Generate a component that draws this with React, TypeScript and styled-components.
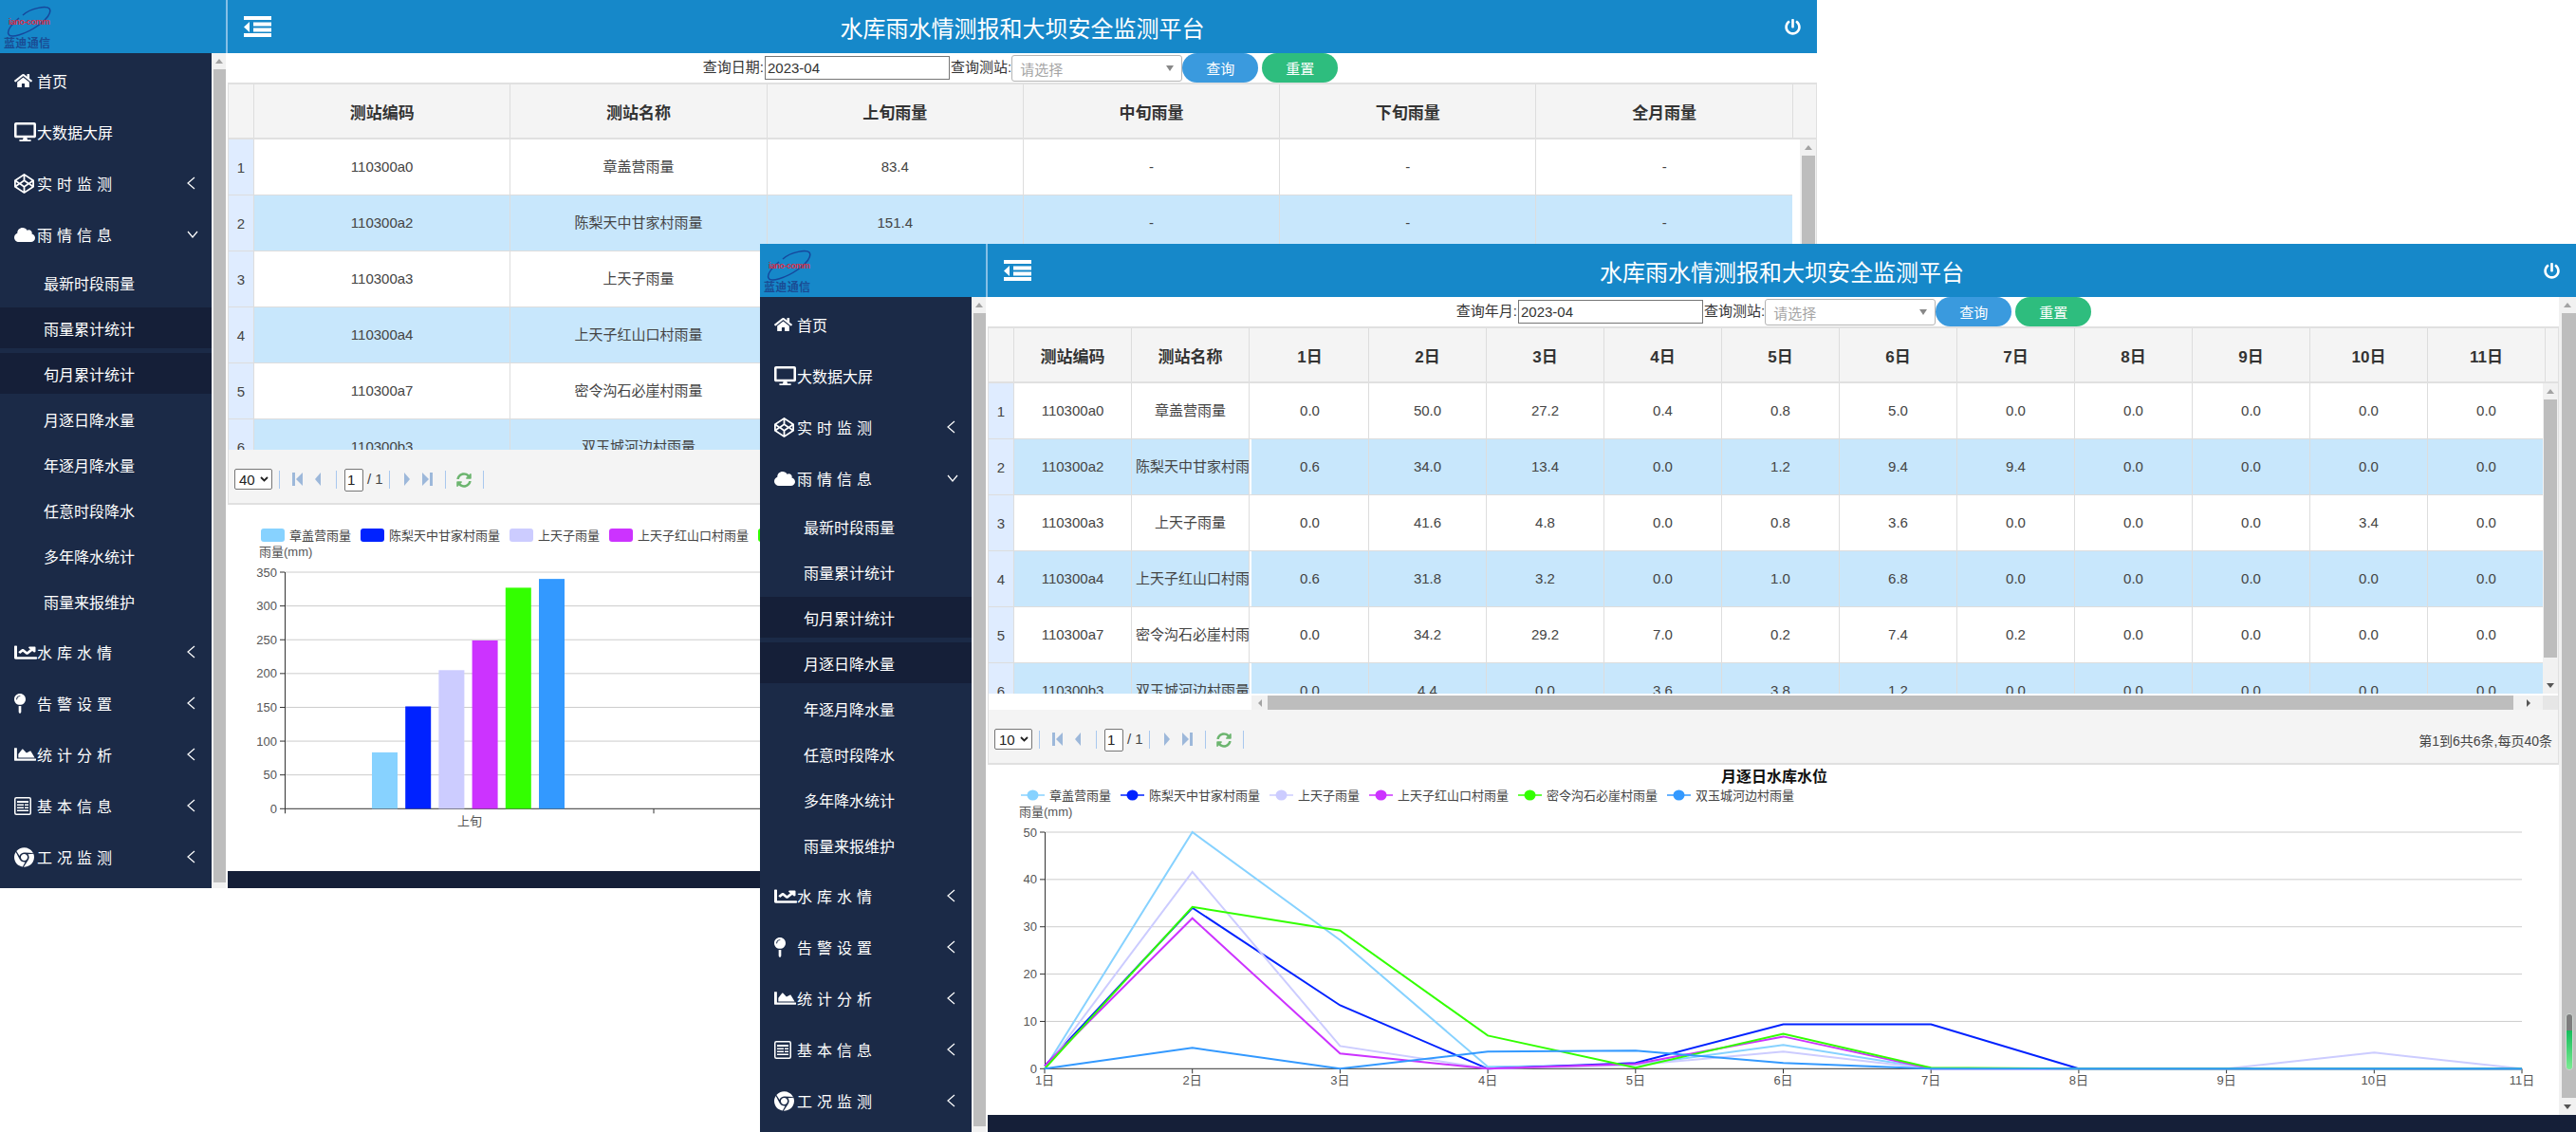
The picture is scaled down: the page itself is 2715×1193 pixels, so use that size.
import React from "react";
import styled, { createGlobalStyle } from "styled-components";
import {
  FaHome, FaDesktop, FaCodepen, FaCloud, FaChartLine, FaMapPin, FaChartArea,
  FaChrome, FaPowerOff, FaSyncAlt,
} from "react-icons/fa";

const FONT = `"Liberation Sans", "Noto Sans CJK SC", sans-serif`;
const SERIES_COLORS = ["#87d2ff", "#0022ff", "#ccccff", "#cc33ff", "#33ff00", "#3399ff"];
const NAMES = ["章盖营雨量", "陈梨天中甘家村雨量", "上天子雨量", "上天子红山口村雨量", "密令沟石必崖村雨量", "双玉城河边村雨量"];
const CODES = ["110300a0", "110300a2", "110300a3", "110300a4", "110300a7", "110300b3"];
const PAGER_TEXT = "第1到6共6条,每页40条";

const Global = createGlobalStyle`
  html, body { margin: 0; padding: 0; background: #fff; }
  body { width: 2715px; height: 1193px; overflow: hidden; font-family: ${FONT}; }
  * { box-sizing: border-box; }
`;

const Desktop = styled.div`
  position: relative;
  width: 2715px;
  height: 1193px;
  background: #fff;
  overflow: hidden;
`;

const Window = styled.section<{ $left: number; $top: number; $width: number }>`
  position: absolute;
  left: ${(p) => p.$left}px;
  top: ${(p) => p.$top}px;
  width: ${(p) => p.$width}px;
  height: 936px;
  display: grid;
  grid-template-columns: 240px 1fr;
  grid-template-rows: 56px 880px;
  background: #fff;
`;

const Brand = styled.div`
  background: #1688c9;
  border-right: 2px solid #86bfe6;
  padding: 6px 0 0 3px;
`;

const TopBar = styled.header`
  background: #1688c9;
  display: grid;
  grid-template-columns: 1fr auto 1fr;
  align-items: center;
  color: #fff;
`;

const Toggle = styled.svg`
  width: 29px;
  height: 22px;
  margin-left: 17px;
  display: block;
`;

const Title = styled.h1`
  margin: 0;
  font-size: 24px;
  font-weight: 400;
  white-space: nowrap;
  color: #fff;
`;

const Power = styled.span`
  justify-self: end;
  margin-right: 17px;
  display: flex;
  font-size: 17px;
  color: #fff;
`;

const Side = styled.aside`
  display: flex;
  width: 238px;
  height: 100%;
`;

const Menu = styled.nav`
  width: 223px;
  height: 100%;
  background: #1b2a47;
  padding-top: 2px;
  overflow: hidden;
`;

const MenuItem = styled.div`
  height: 54px;
  display: flex;
  align-items: center;
  padding-left: 15px;
  color: #fff;
  font-size: 16px;
  white-space: nowrap;
`;

const MenuIcon = styled.span<{ $w: number; $h: number }>`
  width: 24px;
  flex: none;
  display: flex;
  align-items: center;
  color: #fff;

  svg {
    width: ${(p) => p.$w}px;
    height: ${(p) => p.$h}px;
    display: block;
  }
`;

const MenuLabel = styled.span<{ $spaced?: boolean }>`
  flex: 1;
  letter-spacing: ${(p) => (p.$spaced ? "5px" : "0")};
`;

const Chevron = styled.svg`
  width: 12px;
  height: 14px;
  margin-right: 14px;
  flex: none;
`;

const SubList = styled.div`
  padding-top: 2px;
`;

const SubItem = styled.div<{ $active?: boolean }>`
  height: 43px;
  margin-bottom: 5px;
  padding-left: 46px;
  display: flex;
  align-items: center;
  color: #fff;
  font-size: 16px;
  background: ${(p) => (p.$active ? "#151f38" : "transparent")};
`;

const Track = styled.div<{ $w: number }>`
  width: ${(p) => p.$w}px;
  flex: none;
  background: #f1f1f1;
  display: flex;
  flex-direction: column;
  align-items: flex-end;
`;

const ArrowSlot = styled.div`
  height: 17px;
  align-self: stretch;
  display: flex;
  align-items: center;
  justify-content: center;
  flex: none;
`;

const ArrowSlotEnd = styled(ArrowSlot)`
  margin-top: auto;
`;

const Thumb = styled.div<{ $w: number; $h?: number }>`
  width: ${(p) => p.$w}px;
  background: #bdbdbd;
  ${(p) => (p.$h ? `height: ${p.$h}px; flex: none;` : "flex: 1;")}
`;

const TriUp = styled.span`
  border-left: 4px solid transparent;
  border-right: 4px solid transparent;
  border-bottom: 5px solid #a3a3a3;
`;

const TriDown = styled.span`
  border-left: 4px solid transparent;
  border-right: 4px solid transparent;
  border-top: 5px solid #555;
`;

const TriLeft = styled.span`
  border-top: 4px solid transparent;
  border-bottom: 4px solid transparent;
  border-right: 4px solid #a3a3a3;
`;

const TriRight = styled.span`
  border-top: 4px solid transparent;
  border-bottom: 4px solid transparent;
  border-left: 4px solid #555;
`;

const TrackFoot = styled.div`
  height: 6px;
  flex: none;
`;

const Main = styled.main`
  display: flex;
  flex-direction: column;
  min-width: 0;
  height: 100%;
`;

const MainBody = styled.div`
  flex: 1;
  min-height: 0;
  display: flex;
`;

const Content = styled.div`
  flex: 1;
  min-width: 0;
  display: flex;
  flex-direction: column;
`;

const Footer = styled.div`
  height: 18px;
  flex: none;
  background: #151f38;
`;

const FilterBar = styled.div<{ $nudge: number }>`
  height: 31px;
  flex: none;
  display: flex;
  justify-content: center;
  align-items: flex-start;
  padding-left: ${(p) => p.$nudge}px;
  font-size: 15px;
  color: #333;
`;

const FilterLabel = styled.label`
  white-space: nowrap;
  line-height: 28px;
  margin-top: 1px;
`;

const DateField = styled.div`
  width: 195px;
  height: 25px;
  margin: 3px 1px 0 1px;
  border: 1px solid #767676;
  padding-left: 2px;
  line-height: 23px;
  color: #333;
  background: #fff;
`;

const SelectField = styled.div`
  width: 180px;
  height: 28px;
  margin-top: 2px;
  border: 1px solid #b4b4b4;
  border-radius: 3px;
  padding: 0 8px;
  display: flex;
  justify-content: space-between;
  align-items: center;
  color: #a5a5a5;
`;

const Caret = styled.span`
  border-left: 4px solid transparent;
  border-right: 4px solid transparent;
  border-top: 6px solid #888;
`;

const PillButton = styled.button<{ $color: string }>`
  width: 80px;
  height: 31px;
  margin-right: 4px;
  border: 0;
  padding: 0;
  border-radius: 16px;
  background: ${(p) => p.$color};
  color: #fff;
  font: 15px ${FONT};
`;

const GridPanel = styled.div`
  flex: none;
  border-left: 1px solid #e0e0e0;
  border-right: 1px solid #e0e0e0;
`;

const HeadRow = styled.div`
  height: 60px;
  display: flex;
  background: #f4f4f4;
  border-top: 2px solid #e0e0e0;
  border-bottom: 2px solid #e0e0e0;
`;

const HeadCell = styled.div<{ $w: number }>`
  flex: 0 0 ${(p) => p.$w}px;
  border-right: 1px solid #ddd;
  display: flex;
  align-items: center;
  justify-content: center;
  font-size: 17px;
  font-weight: 700;
  color: #333;
  white-space: nowrap;
`;

const HeadGap = styled.div<{ $w: number }>`
  flex: 0 0 ${(p) => p.$w}px;
`;

const BodyWrap = styled.div`
  display: flex;
  height: 327px;
`;

const BodyRows = styled.div`
  flex: 1;
  min-width: 0;
  overflow: hidden;
`;

const Row = styled.div`
  display: flex;
  height: 59px;
`;

const RowNo = styled.div<{ $w: number }>`
  flex: 0 0 ${(p) => p.$w}px;
  background: #dfecff;
  border-right: 1px solid #ddd;
  border-bottom: 1px solid #ddd;
  display: flex;
  align-items: center;
  justify-content: center;
  font-size: 15px;
  color: #444;
`;

const Cell = styled.div<{ $w: number; $alt: boolean }>`
  flex: 0 0 ${(p) => p.$w}px;
  background: ${(p) => (p.$alt ? "#c8e7fc" : "#fff")};
  border-right: 1px solid #ddd;
  border-bottom: 1px solid #ddd;
  padding: 0 4px;
  line-height: 58px;
  text-align: center;
  font-size: 15px;
  color: #444;
  white-space: nowrap;
  overflow: hidden;
`;

const RowGap = styled.div<{ $w: number }>`
  flex: 0 0 ${(p) => p.$w}px;
  background: #fff;
  border-bottom: 1px solid #ddd;
`;

const ScrollGutter = styled.div<{ $w: number }>`
  flex: 0 0 ${(p) => p.$w}px;
  display: flex;
  justify-content: flex-end;
`;

const TableVBar = styled(Track)`
  align-items: center;
`;

const HBarRow = styled.div`
  height: 17px;
  display: flex;
  padding-top: 2px;
`;

const HBarBlank = styled.div`
  flex: 0 0 277px;
`;

const HBarTrack = styled.div`
  flex: 1;
  display: flex;
  background: #f1f1f1;
`;

const HBarArrow = styled.div<{ $w: number }>`
  flex: 0 0 ${(p) => p.$w}px;
  display: flex;
  align-items: center;
  justify-content: center;
`;

const HBarThumb = styled.div`
  flex: 1;
  background: #bdbdbd;
`;

const HBarCorner = styled.div`
  flex: 0 0 16px;
  background: #e6e6e6;
`;

const Pager = styled.div`
  height: 58px;
  display: flex;
  align-items: flex-start;
  padding: 20px 6px 0 6px;
  background: #f4f4f4;
  border-bottom: 2px solid #e0e0e0;
  font-size: 15px;
  color: #444;
`;

const PageSize = styled.div`
  width: 40px;
  height: 22px;
  border: 1px solid #767676;
  border-radius: 2px;
  background: #fff;
  display: flex;
  align-items: center;
  justify-content: space-between;
  padding: 0 3px 0 4px;
  color: #222;
`;

const PagerSep = styled.span<{ $gap: number }>`
  width: 1px;
  height: 19px;
  margin: 2px 0 0 ${(p) => p.$gap}px;
  background: #a9c8ee;
  flex: none;
`;

const PagerIcon = styled.svg<{ $gap: number; $w: number }>`
  width: ${(p) => p.$w}px;
  height: 14px;
  margin: 4px 0 0 ${(p) => p.$gap}px;
  flex: none;
`;

const PageInput = styled.div`
  width: 20px;
  height: 24px;
  margin-left: 8px;
  border: 1px solid #767676;
  border-radius: 2px;
  background: #fff;
  padding-left: 2px;
  line-height: 22px;
  color: #222;
`;

const PageTotal = styled.span`
  margin: 2px 0 0 4px;
  width: 16px;
  white-space: nowrap;
`;

const Refresh = styled.span`
  margin: 4px 0 0 11px;
  display: flex;
  font-size: 16px;
  color: #6cb56f;
`;

const PagerInfo = styled.span`
  margin: 2px 0 0 auto;
  font-size: 14px;
  color: #444;
  white-space: nowrap;
`;

const ChartBox = styled.div`
  flex: 1;
  min-height: 0;
  overflow: hidden;
`;

const ChartSvg = styled.svg`
  display: block;
  font-family: ${FONT};
`;

const Gauge = styled.div`
  position: absolute;
  left: 1903px;
  top: 811px;
  width: 8px;
  height: 60px;
  border-radius: 4px;
  overflow: hidden;
  display: flex;
  flex-direction: column;
  border: 1px solid #cfd8d2;
`;

const GaugeEmpty = styled.div`
  height: 17px;
  background: #7d7d7d;
`;

const GaugeFill = styled.div`
  flex: 1;
  background: linear-gradient(#14bd5b, #7cec93);
`;

const Logo = () => (
  <svg width="60" height="46" viewBox="0 0 60 46">
    <path d="M17 13 C10 19 4 26 6 30 C8 35 24 30 37 21 C46 15 52 7 49 3 C46 0 30 2 21 10" fill="none" stroke="#16479c" strokeWidth="1.5" />
    <text x="6" y="19.5" fontSize="9" fontWeight="700" fill="#d6304a" fontFamily={FONT} textLength="44">iano-comm</text>
    <text x="1" y="44" fontSize="12" fontWeight="700" fill="#1a4c94" fontFamily={FONT} textLength="49">蓝迪通信</text>
  </svg>
);

const NewspaperGlyph = () => (
  <svg viewBox="0 0 18 19" fill="#fff">
    <rect x="0.75" y="0.75" width="16.5" height="17.5" rx="1.5" fill="none" stroke="#fff" strokeWidth="1.5" />
    <rect x="3" y="4" width="12" height="2" />
    <rect x="3" y="7.5" width="7" height="1.5" />
    <rect x="11" y="7.5" width="4" height="1.5" />
    <rect x="3" y="10.5" width="7" height="1.5" />
    <rect x="11" y="10.5" width="4" height="1.5" />
    <rect x="3" y="13.5" width="12" height="1.5" />
  </svg>
);

const LeftChevron = () => (
  <Chevron viewBox="0 0 12 14">
    <path d="M8 1 L1 7 L8 13" fill="none" stroke="#fff" strokeWidth="1.2" />
  </Chevron>
);

const DownChevron = () => (
  <Chevron viewBox="0 0 12 14">
    <path d="M1 4 L6 10 L11 4" fill="none" stroke="#fff" strokeWidth="1.2" />
  </Chevron>
);

const STRETCH = { preserveAspectRatio: "none" };

const TOP_A = [
  { icon: <FaHome {...STRETCH} />, w: 19, h: 16, label: "首页" },
  { icon: <FaDesktop {...STRETCH} />, w: 23, h: 20, label: "大数据大屏" },
  { icon: <FaCodepen {...STRETCH} />, w: 21, h: 21, label: "实时监测", spaced: true, chev: true },
];
const SUBS = ["最新时段雨量", "雨量累计统计", "旬月累计统计", "月逐日降水量", "年逐月降水量", "任意时段降水", "多年降水统计", "雨量来报维护"];
const TOP_B = [
  { icon: <FaChartLine {...STRETCH} />, w: 24, h: 19, label: "水库水情" },
  { icon: <FaMapPin {...STRETCH} />, w: 12, h: 21, label: "告警设置" },
  { icon: <FaChartArea {...STRETCH} />, w: 23, h: 18, label: "统计分析" },
  { icon: <NewspaperGlyph />, w: 18, h: 19, label: "基本信息" },
  { icon: <FaChrome {...STRETCH} />, w: 21, h: 21, label: "工况监测" },
];

const Sidebar = ({ active }: { active: number[] }) => (
  <Side>
    <Menu>
      {TOP_A.map((m) => (
        <MenuItem key={m.label}>
          <MenuIcon $w={m.w} $h={m.h}>{m.icon}</MenuIcon>
          <MenuLabel $spaced={m.spaced}>{m.label}</MenuLabel>
          {m.chev && <LeftChevron />}
        </MenuItem>
      ))}
      <MenuItem>
        <MenuIcon $w={22} $h={17}><FaCloud {...STRETCH} /></MenuIcon>
        <MenuLabel $spaced>雨情信息</MenuLabel>
        <DownChevron />
      </MenuItem>
      <SubList>
        {SUBS.map((s, i) => (
          <SubItem key={s} $active={active.includes(i)}>{s}</SubItem>
        ))}
      </SubList>
      {TOP_B.map((m) => (
        <MenuItem key={m.label}>
          <MenuIcon $w={m.w} $h={m.h}>{m.icon}</MenuIcon>
          <MenuLabel $spaced>{m.label}</MenuLabel>
          <LeftChevron />
        </MenuItem>
      ))}
    </Menu>
    <Track $w={15}>
      <ArrowSlot><TriUp /></ArrowSlot>
      <Thumb $w={13} />
      <TrackFoot />
    </Track>
  </Side>
);

const Header = () => (
  <TopBar>
    <Toggle viewBox="0 0 29 22" fill="#fff">
      <rect width="29" height="4" />
      <rect x="10" y="6.5" width="19" height="4" />
      <rect x="10" y="12.5" width="19" height="4" />
      <rect y="18" width="29" height="4" />
      <polygon points="6,6 0,11.5 6,17" />
    </Toggle>
    <Title>水库雨水情测报和大坝安全监测平台</Title>
    <Power><FaPowerOff /></Power>
  </TopBar>
);

const Filters = ({ dateLabel, nudge }: { dateLabel: string; nudge: number }) => (
  <FilterBar $nudge={nudge}>
    <FilterLabel>{dateLabel}:</FilterLabel>
    <DateField>2023-04</DateField>
    <FilterLabel>查询测站:</FilterLabel>
    <SelectField>请选择<Caret /></SelectField>
    <PillButton $color="#3a9ade">查询</PillButton>
    <PillButton $color="#2ebd7e">重置</PillButton>
  </FilterBar>
);

const PagerBar = ({ size }: { size: string }) => (
  <Pager>
    <PageSize>
      {size}
      <svg width="9" height="6" viewBox="0 0 9 6"><path d="M1 1 L4.5 4.5 L8 1" fill="none" stroke="#222" strokeWidth="1.8" /></svg>
    </PageSize>
    <PagerSep $gap={7} />
    <PagerIcon $gap={13} $w={11} viewBox="0 0 11 14" fill="#9db8da">
      <rect width="3" height="14" />
      <polygon points="11,0 4,7 11,14" />
    </PagerIcon>
    <PagerIcon $gap={13} $w={6} viewBox="0 0 6 14" fill="#9db8da">
      <polygon points="6,0 0,7 6,14" />
    </PagerIcon>
    <PagerSep $gap={16} />
    <PageInput>1</PageInput>
    <PageTotal>/ 1</PageTotal>
    <PagerSep $gap={7} />
    <PagerIcon $gap={15} $w={6} viewBox="0 0 6 14" fill="#9db8da">
      <polygon points="0,0 6,7 0,14" />
    </PagerIcon>
    <PagerIcon $gap={13} $w={11} viewBox="0 0 11 14" fill="#9db8da">
      <polygon points="0,0 7,7 0,14" />
      <rect x="8" width="3" height="14" />
    </PagerIcon>
    <PagerSep $gap={13} />
    <Refresh><FaSyncAlt /></Refresh>
    <PagerSep $gap={12} />
    <PagerInfo>{PAGER_TEXT}</PagerInfo>
  </Pager>
);

type LegendMark = "swatch" | "line";

const Legend = ({ mark }: { mark: LegendMark }) => {
  let x = 35;
  return (
    <g>
      {NAMES.map((n, i) => {
        const x0 = x;
        x += 30 + n.length * 13 + 10;
        return (
          <g key={n}>
            {mark === "swatch" ? (
              <rect x={x0} y={25} width={25} height={14} rx={3} fill={SERIES_COLORS[i]} />
            ) : (
              <g>
                <line x1={x0} x2={x0 + 25} y1={32} y2={32} stroke={SERIES_COLORS[i]} strokeWidth={1.5} />
                <ellipse cx={x0 + 12.5} cy={32} rx={6} ry={5.5} fill={SERIES_COLORS[i]} />
              </g>
            )}
            <text x={x0 + 30} y={37} fontSize={13} fill="#444">{n}</text>
          </g>
        );
      })}
    </g>
  );
};

const Axes = ({ ticks, right, cats }: { ticks: number[]; right: number; cats: { x: number; label?: string }[] }) => {
  const top = 71;
  const zero = 320.3;
  const max = ticks[ticks.length - 1];
  const yOf = (v: number) => zero - (v / max) * (zero - top);
  return (
    <g>
      <text x={33} y={54} fontSize={13} fill="#555">雨量(mm)</text>
      {ticks.map((t) => (
        <g key={t}>
          {t !== 0 && <line x1={60} x2={right} y1={yOf(t)} y2={yOf(t)} stroke="#ccc" strokeWidth={1} />}
          <line x1={55} x2={60} y1={yOf(t)} y2={yOf(t)} stroke="#333" />
          <text x={52} y={yOf(t) + 4.5} fontSize={13} textAnchor="end" fill="#555">{t}</text>
        </g>
      ))}
      <line x1={60.5} x2={60.5} y1={top} y2={zero} stroke="#333" />
      <line x1={60} x2={right} y1={zero} y2={zero} stroke="#333" strokeWidth={1} />
      {cats.map((c, i) => (
        <g key={i}>
          <line x1={c.x} x2={c.x} y1={zero} y2={zero + 5} stroke="#333" />
          {c.label && <text x={c.x} y={zero + 17} fontSize={13} textAnchor="middle" fill="#555">{c.label}</text>}
        </g>
      ))}
    </g>
  );
};

const BAR_VALUES = [83.4, 151.4, 205, 249, 327, 340];

const BarChart = () => (
  <ChartSvg width={1674} height={386}>
    <Axes
      ticks={[0, 50, 100, 150, 200, 250, 300, 350]}
      right={1610}
      cats={[{ x: 60.5 }, { x: 449 }, { x: 837 }, { x: 1225 }, { x: 1610 }]}
    />
    <Legend mark="swatch" />
    <text x={255} y={338} fontSize={13} textAnchor="middle" fill="#555">上旬</text>
    {BAR_VALUES.map((v, i) => {
      const h = (v / 350) * 249.3;
      return <rect key={i} x={152 + i * 35.2} y={320.3 - h} width={27} height={h} fill={SERIES_COLORS[i]} />;
    })}
  </ChartSvg>
);

const LINE_DATA = [
  [0, 50, 27.2, 0.4, 0.8, 5, 0, 0, 0, 0, 0],
  [0.6, 34, 13.4, 0, 1.2, 9.4, 9.4, 0, 0, 0, 0],
  [0, 41.6, 4.8, 0, 0.8, 3.6, 0, 0, 0, 3.4, 0],
  [0.6, 31.8, 3.2, 0, 1, 6.8, 0, 0, 0, 0, 0],
  [0, 34.2, 29.2, 7, 0.2, 7.4, 0.2, 0, 0, 0, 0],
  [0, 4.4, 0, 3.6, 3.8, 1.2, 0, 0, 0, 0, 0],
];

const xOfDay = (i: number) => 60 + i * 155.7;

const LineChart = () => (
  <ChartSvg width={1656} height={369}>
    <text x={829} y={18} fontSize={16} fontWeight={700} textAnchor="middle" fill="#111">月逐日水库水位</text>
    <Axes
      ticks={[0, 10, 20, 30, 40, 50]}
      right={1617}
      cats={Array.from({ length: 11 }, (_, i) => ({ x: xOfDay(i), label: `${i + 1}日` }))}
    />
    <Legend mark="line" />
    {LINE_DATA.map((d, s) => (
      <polyline
        key={s}
        fill="none"
        stroke={SERIES_COLORS[s]}
        strokeWidth={2}
        points={d.map((v, i) => `${xOfDay(i)},${320.3 - v * 4.986}`).join(" ")}
      />
    ))}
  </ChartSvg>
);

const MONTH_COLS = ["上旬雨量", "中旬雨量", "下旬雨量", "全月雨量"];
const MONTH_FIRST = ["83.4", "151.4", "205.0", "249.0", "327.0", "340.0"];

const MonthPanel = () => (
  <GridPanel>
    <HeadRow>
      <HeadCell $w={27} />
      <HeadCell $w={270.3}>测站编码</HeadCell>
      <HeadCell $w={270.3}>测站名称</HeadCell>
      {MONTH_COLS.map((c) => <HeadCell key={c} $w={270.3}>{c}</HeadCell>)}
    </HeadRow>
    <BodyWrap>
      <BodyRows>
        {CODES.map((code, r) => (
          <Row key={code}>
            <RowNo $w={27}>{r + 1}</RowNo>
            <Cell $w={270.3} $alt={r % 2 === 1}>{code}</Cell>
            <Cell $w={270.3} $alt={r % 2 === 1}>{NAMES[r]}</Cell>
            <Cell $w={270.3} $alt={r % 2 === 1}>{MONTH_FIRST[r]}</Cell>
            {[0, 1, 2].map((k) => <Cell key={k} $w={270.3} $alt={r % 2 === 1}>-</Cell>)}
          </Row>
        ))}
      </BodyRows>
      <ScrollGutter $w={25}>
        <TableVBar $w={17}>
          <ArrowSlot><TriUp /></ArrowSlot>
          <Thumb $w={14} />
        </TableVBar>
      </ScrollGutter>
    </BodyWrap>
    <PagerBar size="40" />
  </GridPanel>
);

const DAY_COLS = Array.from({ length: 11 }, (_, i) => i);

const DayPanel = () => (
  <GridPanel>
    <HeadRow>
      <HeadCell $w={27} />
      <HeadCell $w={124}>测站编码</HeadCell>
      <HeadCell $w={124}>测站名称</HeadCell>
      <HeadGap $w={2} />
      {DAY_COLS.map((d) => <HeadCell key={d} $w={124}>{d + 1}日</HeadCell>)}
    </HeadRow>
    <BodyWrap>
      <BodyRows>
        {CODES.map((code, r) => (
          <Row key={code}>
            <RowNo $w={27}>{r + 1}</RowNo>
            <Cell $w={124} $alt={r % 2 === 1}>{code}</Cell>
            <Cell $w={124} $alt={r % 2 === 1}>{NAMES[r]}</Cell>
            <RowGap $w={2} />
            {DAY_COLS.map((d) => (
              <Cell key={d} $w={124} $alt={r % 2 === 1}>{LINE_DATA[r][d].toFixed(1)}</Cell>
            ))}
          </Row>
        ))}
      </BodyRows>
      <TableVBar $w={16}>
        <ArrowSlot><TriUp /></ArrowSlot>
        <Thumb $w={14} $h={272} />
        <ArrowSlotEnd><TriDown /></ArrowSlotEnd>
      </TableVBar>
    </BodyWrap>
    <HBarRow>
      <HBarBlank />
      <HBarTrack>
        <HBarArrow $w={17}><TriLeft /></HBarArrow>
        <HBarThumb />
        <HBarArrow $w={31}><TriRight /></HBarArrow>
      </HBarTrack>
      <HBarCorner />
    </HBarRow>
    <PagerBar size="10" />
  </GridPanel>
);

export default function App() {
  return (
    <Desktop>
      <Global />
      <Window $left={0} $top={0} $width={1915}>
        <Brand><Logo /></Brand>
        <Header />
        <Sidebar active={[1, 2]} />
        <Main>
          <MainBody>
            <Content>
              <Filters dateLabel="查询日期" nudge={0} />
              <MonthPanel />
              <ChartBox><BarChart /></ChartBox>
            </Content>
          </MainBody>
          <Footer />
        </Main>
      </Window>
      <Window $left={801} $top={257} $width={1914}>
        <Brand><Logo /></Brand>
        <Header />
        <Sidebar active={[2, 3]} />
        <Main>
          <MainBody>
            <Content>
              <Filters dateLabel="查询年月" nudge={5} />
              <DayPanel />
              <ChartBox><LineChart /></ChartBox>
            </Content>
            <Track $w={18}>
              <ArrowSlot><TriUp /></ArrowSlot>
              <Thumb $w={15} $h={827} />
              <ArrowSlotEnd><TriDown /></ArrowSlotEnd>
            </Track>
          </MainBody>
          <Footer />
        </Main>
        <Gauge><GaugeEmpty /><GaugeFill /></Gauge>
      </Window>
    </Desktop>
  );
}
